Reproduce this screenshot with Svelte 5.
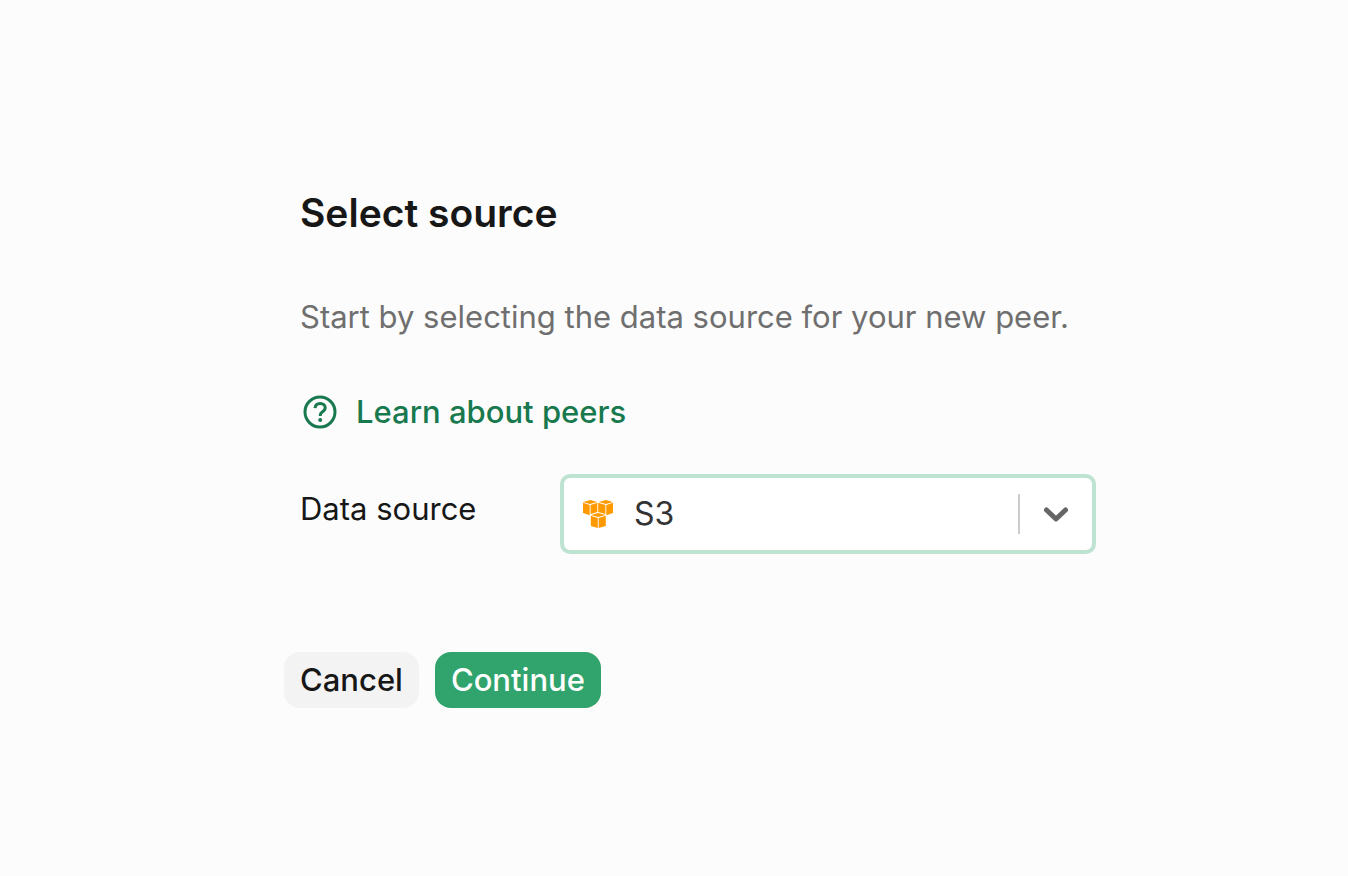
<script lang="ts">
	const sources = ['S3', 'PostgreSQL', 'Snowflake', 'BigQuery', 'ClickHouse'];

	let source = $state('S3');
</script>

<main class="page">
	<form class="create-peer" onsubmit={(e) => e.preventDefault()}>
		<div class="content">
			<h1>Select source</h1>
			<p class="intro">Start by selecting the data source for your new peer.</p>

			<a class="help" href="/docs/peers">
				<svg viewBox="0 0 40 40" fill="none" aria-hidden="true">
					<circle cx="20" cy="20" r="15" stroke="currentColor" stroke-width="3" />
					<path
						d="M15 16.2C15.3 12.9 17.3 11.4 20.2 11.4C23.2 11.4 25.2 13.1 25.2 15.7C25.2 18 23.8 19 22.2 20.1C20.7 21.1 20.2 21.9 20.2 23.9"
						stroke="currentColor"
						stroke-width="3"
					/>
					<circle cx="20.2" cy="28" r="2" fill="currentColor" />
				</svg>
				Learn about peers
			</a>

			<div class="field">
				<label for="source">Data source</label>
				<div class="select">
					<svg class="logo" viewBox="0 0 32 32" aria-hidden="true">
						<g fill="#ff9900">
							<path d="M1 3.9L8.4 2L15.3 3.9L8 6.1Z" />
							<path d="M1 4.8L7.7 6.9V17.2L1 15.1Z" />
							<path d="M8.6 6.9L15.3 4.8V14L8.6 16Z" />
							<path d="M16.7 3.9L23.6 2L31 3.9L24 6.1Z" />
							<path d="M16.2 4.8L23.4 6.9V16L16.2 14Z" />
							<path d="M24.3 6.9L31 4.8V15.1L24.3 17.2Z" />
							<path d="M9 16.9L16.2 14.9L23.6 16.9L16.2 19.1Z" />
							<path d="M8.8 17.8L15.8 19.9V30L8.8 27.9Z" />
							<path d="M16.7 19.9L23.8 17.8V27.9L16.7 30Z" />
						</g>
					</svg>
					<select id="source" bind:value={source}>
						{#each sources as name}
							<option value={name}>{name}</option>
						{/each}
					</select>
					<span class="separator"></span>
					<svg class="chevron" viewBox="0 0 40 40" fill="none" aria-hidden="true">
						<path
							d="M10.5 16L20 25L29.5 16"
							stroke="currentColor"
							stroke-width="5"
							stroke-linecap="round"
							stroke-linejoin="round"
						/>
					</svg>
				</div>
			</div>
		</div>

		<div class="actions">
			<button type="button">Cancel</button>
			<button type="submit" class="primary">Continue</button>
		</div>
	</form>
</main>

<style>
	:global(body) {
		margin: 0;
		background: #fcfcfc;
	}

	.page {
		box-sizing: border-box;
		min-height: 100vh;
		padding: 185px 32px 64px;
		font-family: Inter, 'Liberation Sans', sans-serif;
		font-size: 31px;
		line-height: 40px;
		color: #171717;
	}

	.create-peer {
		box-sizing: border-box;
		max-width: 844px;
		margin: 0 auto;
		padding-left: 32px;
	}

	.content {
		padding-left: 16px;
	}

	h1 {
		margin: 0;
		font-size: 39px;
		line-height: 56px;
		font-weight: 600;
	}

	.intro {
		margin: 56px 0 55px;
		color: #6f6f6f;
	}

	.help {
		display: flex;
		align-items: center;
		gap: 16px;
		width: fit-content;
		color: #18794e;
		font-weight: 500;
		text-decoration: none;
	}

	.help:hover {
		text-decoration: underline;
	}

	.help svg {
		width: 40px;
		height: 40px;
		flex-shrink: 0;
	}

	.field {
		display: flex;
		align-items: flex-start;
		justify-content: space-between;
		margin-top: 42px;
	}

	label {
		padding-top: 15px;
	}

	.select {
		box-sizing: border-box;
		position: relative;
		width: 536px;
		height: 80px;
		border: 4px solid #bee3d2;
		border-radius: 10px;
		background: #fff;
	}

	select {
		appearance: none;
		width: 100%;
		height: 100%;
		padding: 0 80px 0 70px;
		border: 0;
		outline: 0;
		background: transparent;
		font: inherit;
		font-size: 32px;
		color: #333;
	}

	.logo,
	.separator,
	.chevron {
		position: absolute;
		pointer-events: none;
	}

	.logo {
		top: 20px;
		left: 18px;
		width: 32px;
		height: 32px;
	}

	.separator {
		top: 16px;
		right: 72px;
		width: 2px;
		height: 40px;
		background: #ccc;
	}

	.chevron {
		top: 16px;
		right: 16px;
		width: 40px;
		height: 40px;
		color: #666;
	}

	.actions {
		display: flex;
		gap: 16px;
		margin-top: 98px;
	}

	button {
		padding: 8px 16px;
		border: 0;
		border-radius: 16px;
		background: #f3f3f3;
		font: inherit;
		font-weight: 500;
		color: #171717;
		cursor: pointer;
	}

	button.primary {
		background: #30a46c;
		color: #fff;
	}
</style>
